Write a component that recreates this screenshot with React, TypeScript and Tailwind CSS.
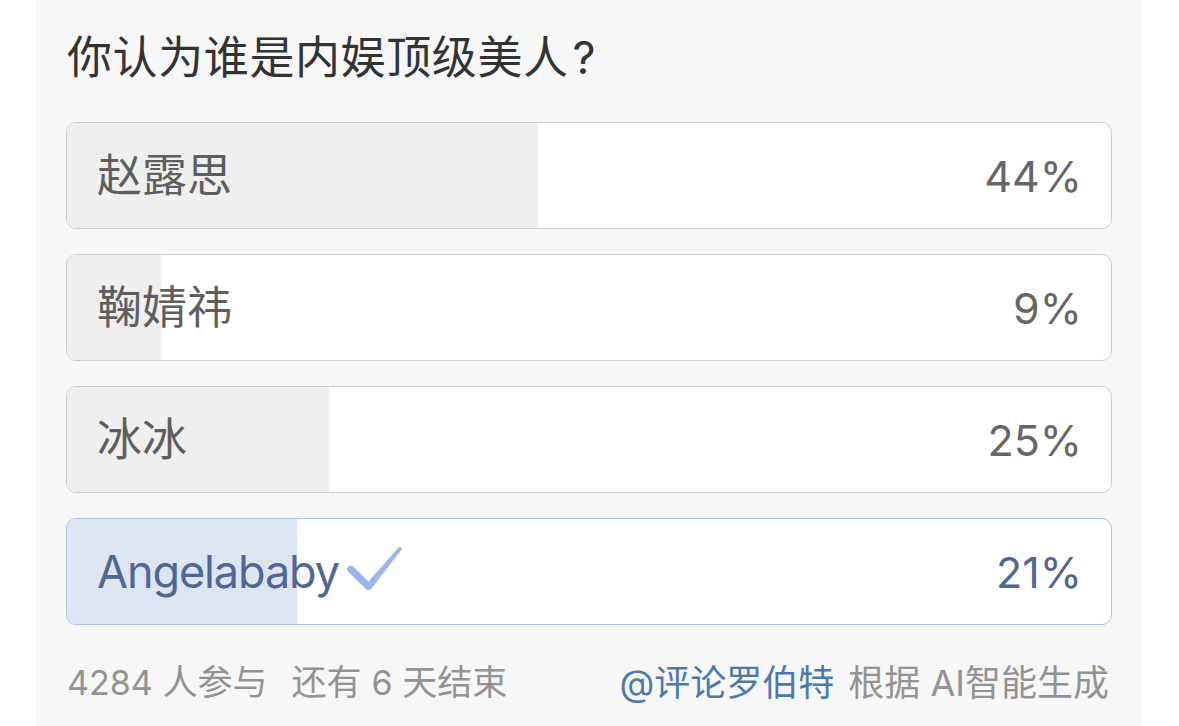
import React from "react";

type Opt = { label: string; pct: string; bar: number; selected?: boolean };

const options: Opt[] = [
  { label: "赵露思", pct: "44%", bar: 471 },
  { label: "鞠婧祎", pct: "9%", bar: 94 },
  { label: "冰冰", pct: "25%", bar: 262 },
  { label: "Angelababy", pct: "21%", bar: 230, selected: true },
];

function Check() {
  return (
    <svg width="58" height="48" viewBox="0 0 58 48" className="ml-[7px] shrink-0 mt-[-6px]">
      <path
        d="M2.5 21.5 C4 20 6 20.5 7.5 22 L22.5 36.5 L52.5 2.5 C54 1 56.5 2.5 55.5 4.5 L25.5 43.5 C24 45.5 21.5 45.8 19.8 44 L1.5 26 C0.3 24.8 1 22.8 2.5 21.5 Z"
        fill="#9bb7ea"
      />
    </svg>
  );
}

function Option({ o }: { o: Opt }) {
  return (
    <div
      className={`grid h-[107px] rounded-[10px] border overflow-hidden bg-white ${
        o.selected ? "border-[#a9c2ee]" : "border-[#cdcdcd]"
      }`}
    >
      <div
        className={`col-start-1 row-start-1 h-full ${o.selected ? "bg-[#dde5f3]" : "bg-[#efefef]"}`}
        style={{ width: o.bar }}
      />
      <div className="col-start-1 row-start-1 flex items-center justify-between pl-[30px] pr-[29px]">
        <div className="flex items-center">
          <span
            className={`text-[45px] leading-[60px] ${
              o.selected ? "text-[#4f6792] tracking-[-1.1px]" : "text-[#5e5e5e]"
            }`}
          >
            {o.label}
          </span>
          {o.selected && <Check />}
        </div>
        <span className={`text-[43px] leading-[60px] ${o.selected ? "text-[#4f6792]" : "text-[#666666]"}`}>
          {o.pct}
        </span>
      </div>
    </div>
  );
}

export default function App() {
  return (
    <div
      className="w-full h-[726px] bg-white overflow-hidden"
      style={{ fontFamily: 'Inter, "Noto Sans CJK SC", sans-serif' }}
    >
      <div className="ml-[36px] w-[1106px] h-full bg-[#f7f7f7] px-[30px] pt-[24px]">
        <div className="text-[45px] leading-[67px] text-[#333333] pl-[1px] tracking-[0.6px]">
          你认为谁是内娱顶级美人<span className="ml-[4px]">?</span>
        </div>
        <div className="mt-[31px] flex flex-col gap-[25px]">
          {options.map((o) => (
            <Option key={o.label} o={o} />
          ))}
        </div>
        <div className="mt-[37px] flex items-center justify-between text-[35px] leading-[40px] text-[#939393] pl-[1px] pr-[3px]">
          <div className="flex items-center">
            <span>
              <span className="text-[34px]">4284</span> 人参与
            </span>
            <span className="ml-[24px]">
              还有 <span className="text-[34px]">6</span> 天结束
            </span>
          </div>
          <div className="flex items-center text-[36px]">
            <span className="text-[#4a79b2]">@评论罗伯特</span>
            <span className="ml-[14px]">根据 AI智能生成</span>
          </div>
        </div>
      </div>
    </div>
  );
}
